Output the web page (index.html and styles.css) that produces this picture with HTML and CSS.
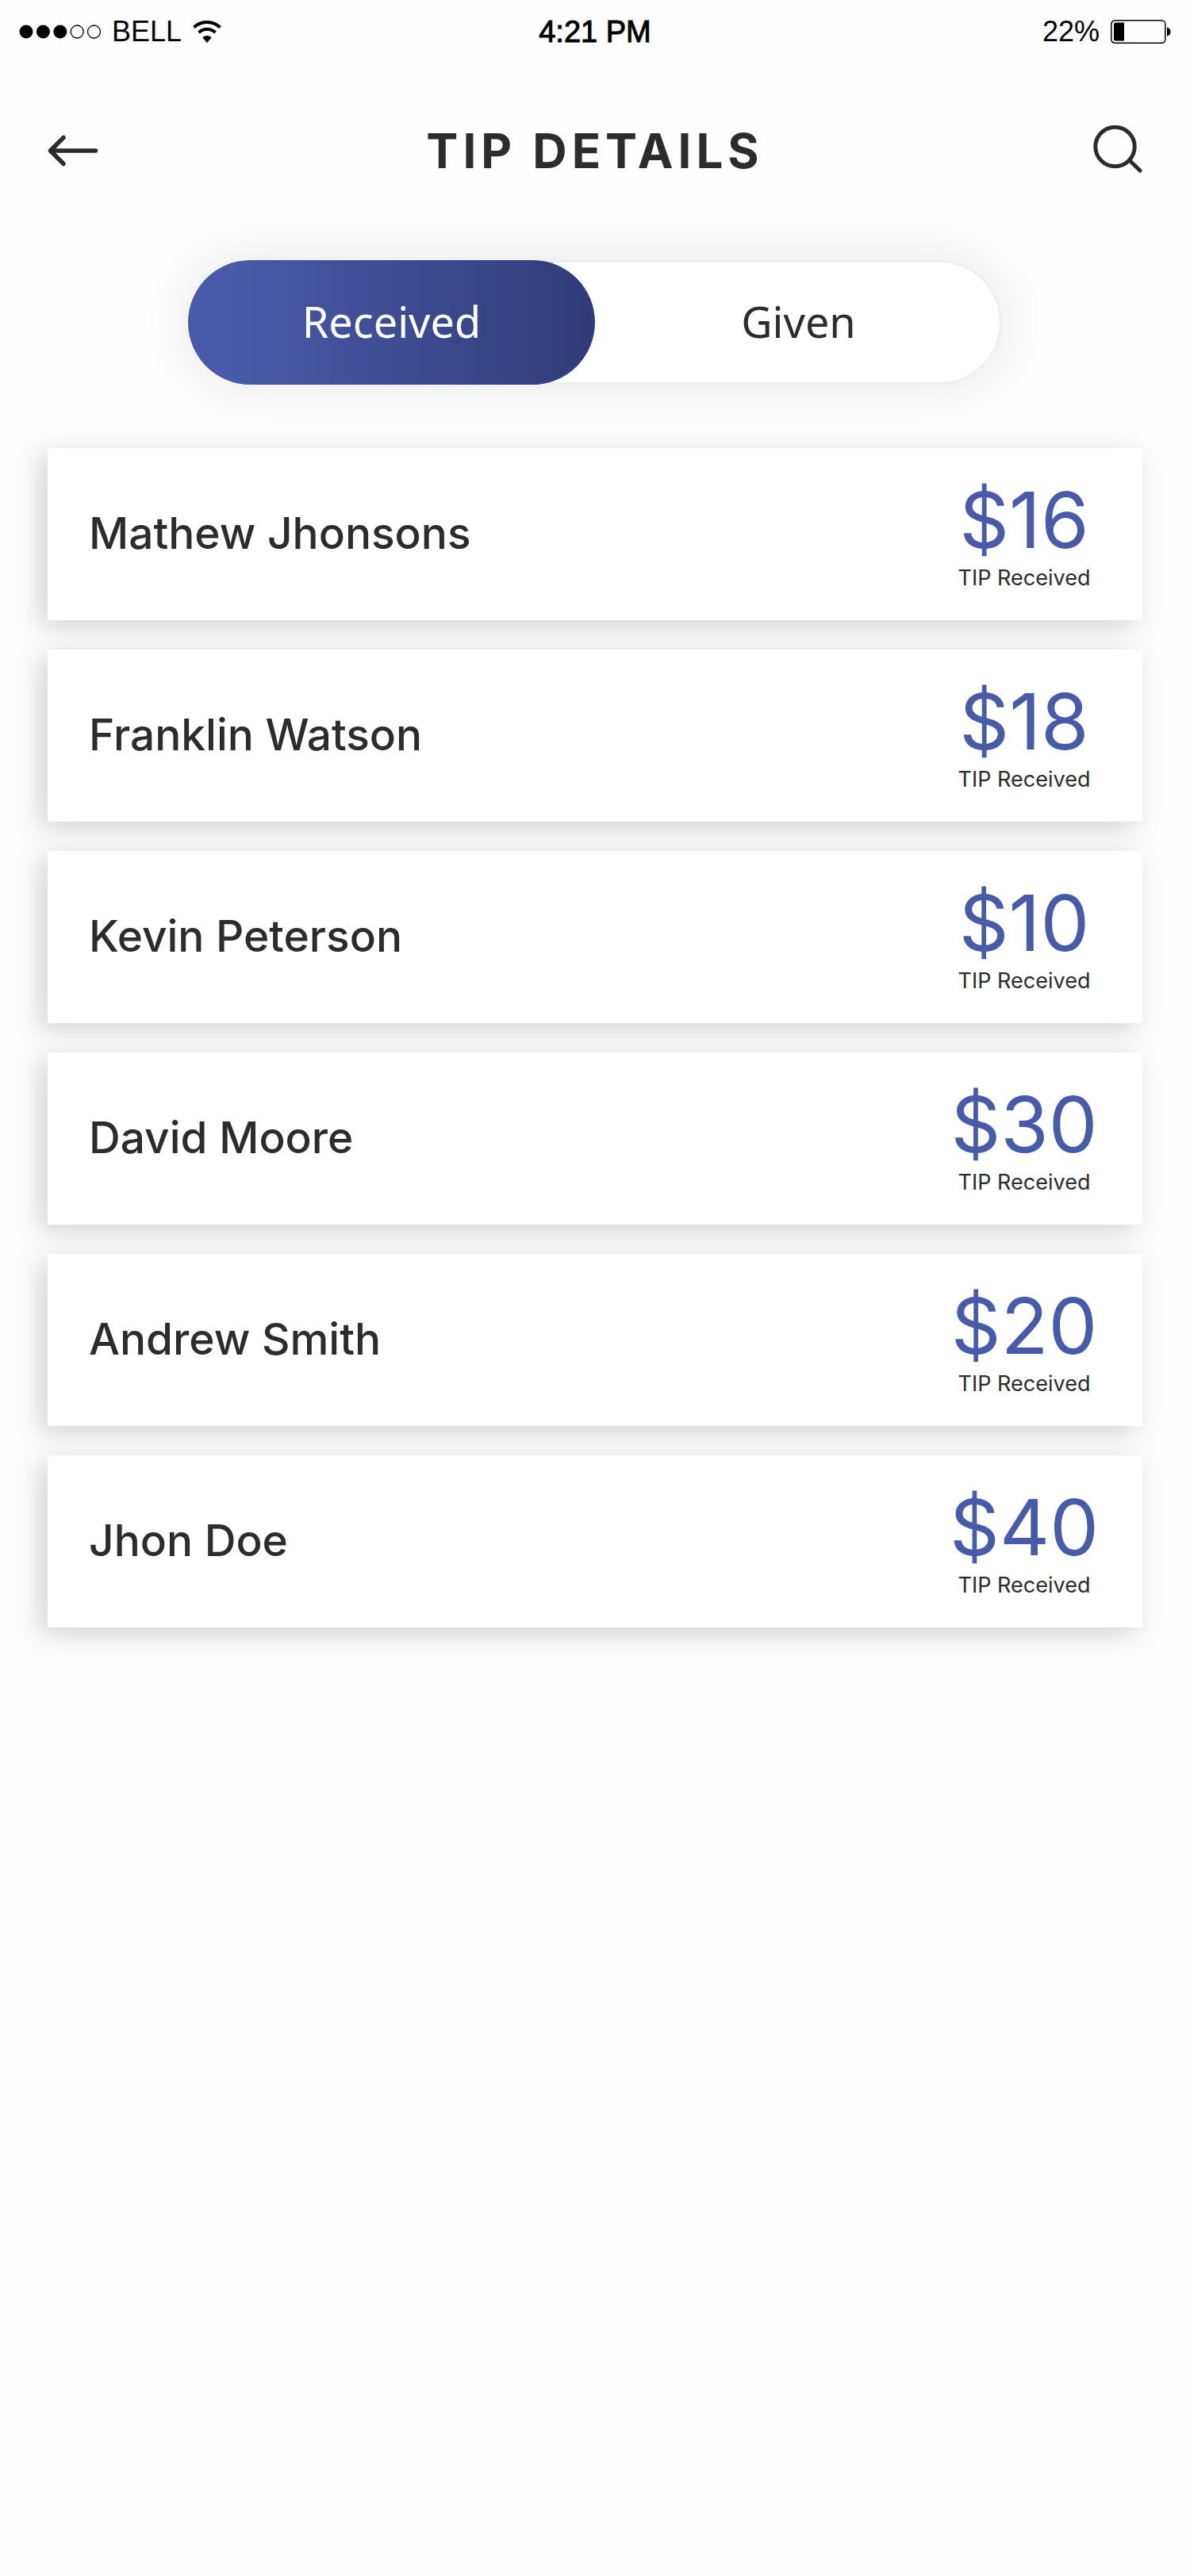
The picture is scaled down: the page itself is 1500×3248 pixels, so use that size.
FILE: index.html
```html
<!DOCTYPE html>
<html lang="en">
<head>
    <meta charset="UTF-8">
    <meta name="viewport" content="width=device-width, initial-scale=1.0">
    <title>Tip Details</title>
    <link rel="stylesheet" href="styles.css">
</head>
<body>
    <div class="status-bar">
        <div class="status-left">
            <svg class="signal" width="103" height="18" viewBox="0 0 103 18">
                <circle cx="9" cy="9" r="8.5"/>
                <circle cx="30.4" cy="9" r="8.5"/>
                <circle cx="51.8" cy="9" r="8.5"/>
                <circle cx="73.2" cy="9" r="8" fill="none" stroke="#000" stroke-width="1.3"/>
                <circle cx="94.5" cy="9" r="8" fill="none" stroke="#000" stroke-width="1.3"/>
            </svg>
            <span>BELL</span>
            <svg class="wifi" width="36" height="28" viewBox="0 0 36 28">
                <path d="M1.5 8.5C11 -.3 25 -.3 34.5 8.5" fill="none" stroke="#000" stroke-width="4"/>
                <path d="M7.5 15C13.5 9.4 22.5 9.4 28.5 15" fill="none" stroke="#000" stroke-width="4"/>
                <path d="M12.3 21.2C15.5 18.2 20.5 18.2 23.7 21.2L18 28Z"/>
            </svg>
        </div>
        <div class="time">4:21 PM</div>
        <div class="status-right">
            <span>22%</span>
            <svg class="battery" width="76" height="30" viewBox="0 0 76 30">
                <rect x=".8" y=".8" width="68" height="28.4" rx="4.5" fill="none" stroke="#000" stroke-width="1.5"/>
                <path d="M6 3.5H17V26.5H6Q4 26.5 4 24.5V5.5Q4 3.5 6 3.5Z"/>
                <path d="M71 9.5Q75.5 10.5 75.5 15T71 20.5Z"/>
            </svg>
        </div>
    </div>

    <header class="header">
        <button class="icon-button" aria-label="Back">
            <svg width="64" height="40" viewBox="0 0 64 40">
                <path d="M60.5 20H4M20 3.5L3.5 20L20 36.5" fill="none" stroke="#2c2c2e" stroke-width="5.5" stroke-linecap="round" stroke-linejoin="round"/>
            </svg>
        </button>
        <h1>TIP DETAILS</h1>
        <button class="icon-button search" aria-label="Search">
            <svg width="62" height="64" viewBox="0 0 62 64">
                <circle cx="27.5" cy="27" r="24.7" fill="none" stroke="#2c2c2e" stroke-width="5"/>
                <path d="M46 44.5L59 57" fill="none" stroke="#2c2c2e" stroke-width="5" stroke-linecap="round"/>
            </svg>
        </button>
    </header>

    <div class="tabs">
        <button class="tab active">Received</button>
        <button class="tab">Given</button>
    </div>

    <ul class="tip-list">
        <li class="tip-card">
            <span class="name">Mathew Jhonsons</span>
            <div class="tip">
                <span class="amount">$16</span>
                <span class="label">TIP Received</span>
            </div>
        </li>
        <li class="tip-card">
            <span class="name">Franklin Watson</span>
            <div class="tip">
                <span class="amount">$18</span>
                <span class="label">TIP Received</span>
            </div>
        </li>
        <li class="tip-card">
            <span class="name">Kevin Peterson</span>
            <div class="tip">
                <span class="amount">$10</span>
                <span class="label">TIP Received</span>
            </div>
        </li>
        <li class="tip-card">
            <span class="name">David Moore</span>
            <div class="tip">
                <span class="amount">$30</span>
                <span class="label">TIP Received</span>
            </div>
        </li>
        <li class="tip-card">
            <span class="name">Andrew Smith</span>
            <div class="tip">
                <span class="amount">$20</span>
                <span class="label">TIP Received</span>
            </div>
        </li>
        <li class="tip-card">
            <span class="name">Jhon Doe</span>
            <div class="tip">
                <span class="amount">$40</span>
                <span class="label">TIP Received</span>
            </div>
        </li>
    </ul>
</body>
</html>
```
FILE: styles.css
```css
* {
    box-sizing: border-box;
}

body {
    margin: 0;
    min-height: 100vh;
    background-color: #fefefe;
    color: #2c2c2e;
    font-family: Inter, "Liberation Sans", sans-serif;
}

button {
    padding: 0;
    border: none;
    background: none;
    color: inherit;
    cursor: pointer;
}

svg {
    display: block;
}

.status-bar {
    display: grid;
    grid-template-columns: 1fr auto 1fr;
    align-items: center;
    height: 80px;
    padding: 0 24px;
    color: #000;
    font-family: "Liberation Sans", Arial, sans-serif;
    font-size: 36px;
}

.status-left,
.status-right {
    display: flex;
    align-items: center;
    gap: 14px;
}

.status-right {
    justify-content: flex-end;
}

.time {
    font-size: 38px;
    -webkit-text-stroke: 1px #000;
}

.header {
    display: grid;
    grid-template-columns: 1fr auto 1fr;
    align-items: center;
    height: 220px;
    padding: 0 60px;
    margin-bottom: 28px;
}

.header h1 {
    margin: 0;
    font-size: 60px;
    font-weight: 700;
    letter-spacing: 6px;
}

.icon-button {
    justify-self: start;
}

.icon-button.search {
    justify-self: end;
}

.tabs {
    display: flex;
    width: 1026px;
    max-width: 90%;
    height: 157px;
    margin: 0 auto;
    border-radius: 79px;
    background-color: #fff;
    box-shadow: inset 0 0 0 3px #eee, 0 0 60px rgba(0, 0, 0, 0.1);
}

.tab {
    flex: 1;
    padding-bottom: 4px;
    border-radius: 79px;
    font-family: "Noto Sans", "Open Sans", sans-serif;
    font-size: 54px;
}

.tab.active {
    background: linear-gradient(to right, #485ba8 10%, #2f3c78);
    color: #fff;
}

.tip-list {
    display: flex;
    flex-direction: column;
    gap: 37px;
    margin: 80px 60px;
    padding: 0;
    list-style: none;
}

.tip-card {
    display: flex;
    align-items: center;
    justify-content: space-between;
    height: 217px;
    padding: 0 62px 4px 52px;
    background-color: #fff;
    box-shadow: -9px 8px 32px rgba(0, 0, 0, 0.18);
}

.name {
    font-size: 55px;
    font-weight: 500;
}

.tip {
    display: flex;
    flex-direction: column;
    align-items: center;
    width: 174px;
    padding-bottom: 4px;
}

.amount {
    color: #485ba8;
    font-size: 98px;
    line-height: 118px;
}

.label {
    font-size: 27px;
    line-height: 28px;
    white-space: nowrap;
}
```
